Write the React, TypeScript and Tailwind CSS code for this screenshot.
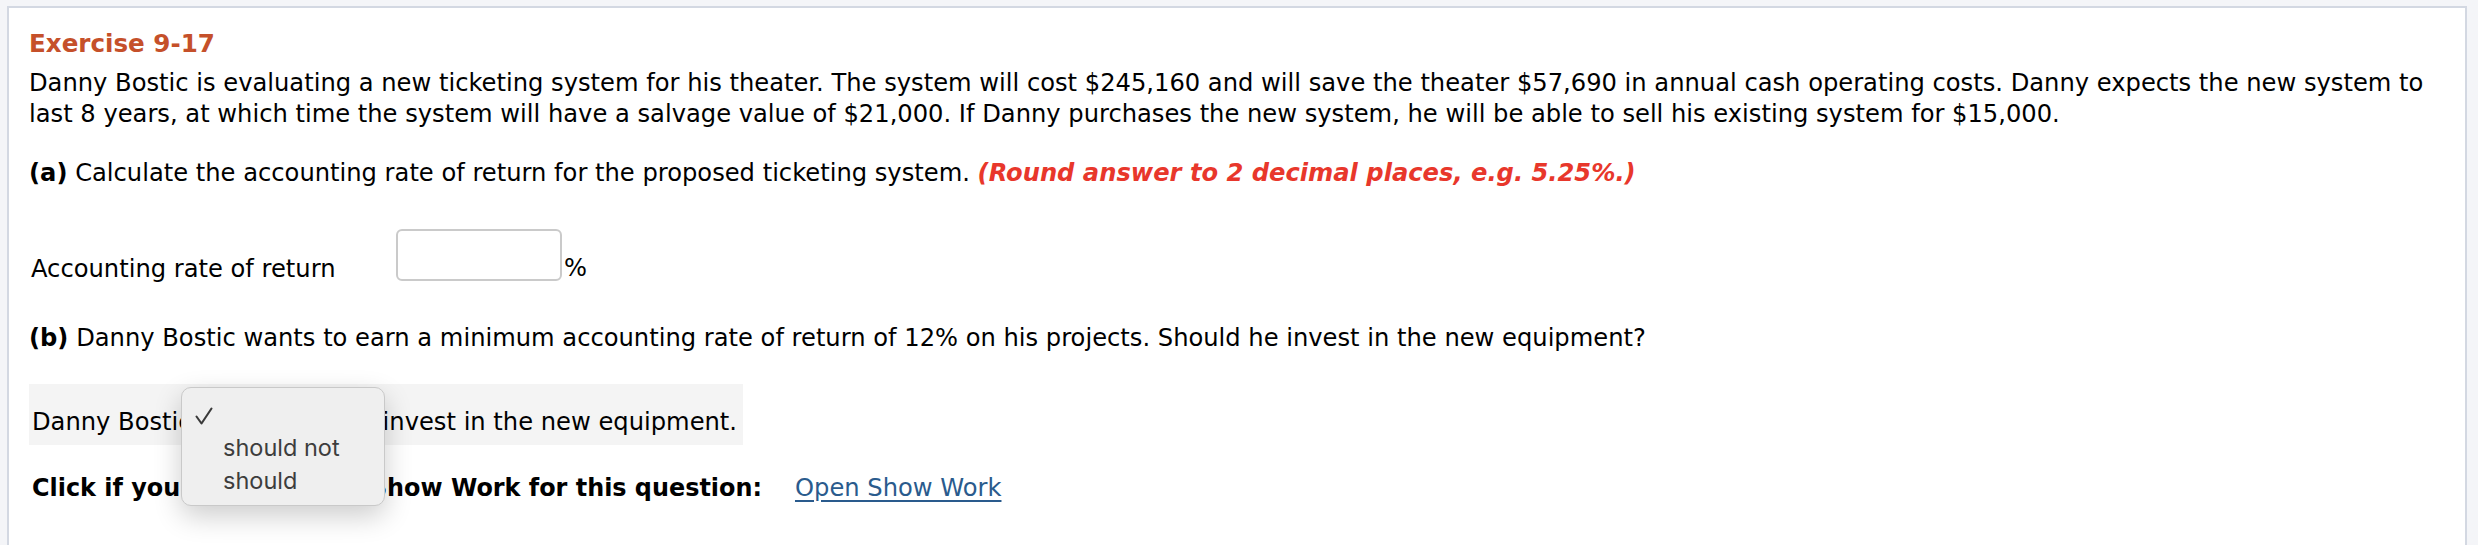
import React from 'react';

const CheckGlyph: React.FC = () => (
  <svg width="18" height="18" viewBox="0 0 18 18" fill="none" className="absolute left-[13px] top-[19px]">
    <path d="M1.5 9.5 L6.5 16.5 L16.5 1.5" stroke="#3a3a3a" strokeWidth="2.1" strokeLinecap="round" strokeLinejoin="round" />
  </svg>
);

const App: React.FC = () => {
  return (
    <div className="min-h-[545px] bg-[#f4f5f8] pl-[7px] pr-[11px] pt-[6px] font-['DejaVu_Sans',Verdana,sans-serif] text-[24.2px] leading-[31px] text-black">
      <div className="min-h-[600px] border-2 border-[#d3d8e2] bg-white px-[20px] pt-[21px]">
        {/* header */}
        <h1 className="text-[24.6px] leading-[30px] font-bold text-[#c5502a]">Exercise 9-17</h1>

        <p className="mt-[9px]">
          <span className="block whitespace-nowrap">
            Danny Bostic is evaluating a new ticketing system for his theater. The system will cost $245,160 and will save the theater $57,690 in annual cash operating costs. Danny expects the new system to
          </span>
          <span className="block whitespace-nowrap">
            last 8 years, at which time the system will have a salvage value of $21,000. If Danny purchases the new system, he will be able to sell his existing system for $15,000.
          </span>
        </p>

        <p className="mt-[28px] whitespace-nowrap">
          <b>(a)</b> Calculate the accounting rate of return for the proposed ticketing system.{' '}
          <em className="font-bold text-[#e8372b]">(Round answer to 2 decimal places, e.g. 5.25%.)</em>
        </p>

        <div className="mt-[40px] flex h-[52px] items-start">
          <span className="mt-[25px] w-[367px] pl-[2px]">Accounting rate of return</span>
          <div className="h-[52px] w-[166px] rounded-[6px] border-2 border-[#cacaca] bg-white" />
          <span className="ml-[2px] mt-[24px]">%</span>
        </div>

        <p className="mt-[42px] whitespace-nowrap">
          <b>(b)</b> Danny Bostic wants to earn a minimum accounting rate of return of 12% on his projects. Should he invest in the new equipment?
        </p>

        {/* answer row with open select menu */}
        <div className="relative mt-[30px] h-[61px] w-[714px] bg-[#f4f4f4] pl-[3px] pt-[23px]">
          <div className="flex whitespace-nowrap">
            <span>Danny Bostic</span>
            <span className="w-[191px]" />
            <span>invest in the new equipment.</span>
          </div>

          <div className="absolute left-[152px] top-[3px] z-10 h-[119px] w-[204px] rounded-[10px] border border-[#c9c9c9] bg-[#efefef] shadow-[0_10px_28px_rgba(0,0,0,0.2)] font-['Inter','Liberation_Sans',sans-serif] text-[23.5px] leading-[33px] text-[#3d3d3d]">
            <CheckGlyph />
            <div className="absolute left-[41px] top-[43px]">
              <div>should not</div>
              <div>should</div>
            </div>
          </div>
        </div>

        <div className="mt-[28px] flex items-start whitespace-nowrap pl-[3px]">
          <span className="text-[23.9px] font-bold">Click if you would like to Show Work for this question:</span>
          <a href="#" className="ml-[33px] text-[#2a5b8d] underline underline-offset-[4px]">
            Open Show Work
          </a>
        </div>
      </div>
    </div>
  );
};

export default App;
